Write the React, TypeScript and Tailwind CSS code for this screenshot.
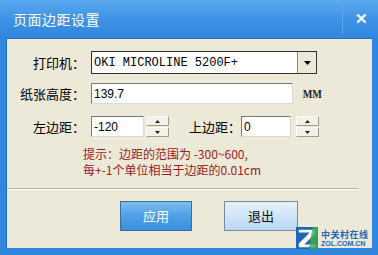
import React from "react";

const cjk = { fontFamily: '"Noto Sans CJK SC", "Noto Sans", sans-serif' };
const mono = { fontFamily: '"Liberation Mono", "Noto Sans CJK SC", monospace' };

function Spinner() {
  return (
    <div className="flex flex-col w-[23px] h-[21px] gap-[1px]">
      <div className="flex-1 flex items-center justify-center bg-[#f3f1e8] border border-t-white border-l-white border-b-[#a09c8c] border-r-[#a09c8c]">
        <svg width="5" height="3" viewBox="0 0 5 3"><path d="M2.5 0 L5 3 L0 3 Z" fill="#222" /></svg>
      </div>
      <div className="flex-1 flex items-center justify-center bg-[#f3f1e8] border border-t-white border-l-white border-b-[#a09c8c] border-r-[#a09c8c]">
        <svg width="5" height="3" viewBox="0 0 5 3"><path d="M0 0 L5 0 L2.5 3 Z" fill="#222" /></svg>
      </div>
    </div>
  );
}

function Inset({ w, children }: { w: string; children?: React.ReactNode }) {
  return (
    <div
      className={`${w} h-[21px] bg-white border border-t-[#7a7a7a] border-l-[#7a7a7a] border-b-[#dcdad0] border-r-[#dcdad0] flex items-center pl-[2px] text-[12px] text-black`}
      style={{ fontFamily: '"Liberation Sans", Arial, sans-serif' }}
    >
      {children}
    </div>
  );
}

export default function App() {
  return (
    <div className="w-[378px] h-[255px] bg-[#2f86dc] flex flex-col relative overflow-hidden" style={cjk}>
      {/* title bar */}
      <div className="h-[38px] flex items-center bg-gradient-to-b from-[#5aa8ee] via-[#3f93e6] to-[#2f86dc] relative">
        <span className="ml-[13px] text-[14px] text-white tracking-[0.5px]">页面边距设置</span>
        <div className="ml-auto h-full flex items-center">
          <div className="w-[1px] h-[30px] bg-[#5ea6ea] mr-[6px]" />
          <span className="w-[24px] text-center text-white text-[15px] font-bold mr-[5px]" style={{ fontFamily: '"Liberation Sans", Arial, sans-serif' }}>✕</span>
        </div>
      </div>
      {/* content */}
      <div className="mx-[6px] h-[210px] bg-[#ece9d8] border-l border-t border-[#1f6fc4] flex flex-col text-[13px] text-black">
        {/* row 1 */}
        <div className="flex items-center mt-[12px] h-[23px]">
          <div className="w-[78px] text-right">打印机：</div>
          <div className="ml-[6px] w-[226px] h-[23px] bg-white border border-[#333] flex items-center">
            <span className="pl-[2px] text-[12px]" style={mono}>OKI MICROLINE 5200F+</span>
            <div className="ml-auto w-[19px] h-full bg-[#ece9d8] border-l border-[#888] flex items-center justify-center">
              <svg width="7" height="4" viewBox="0 0 7 4"><path d="M0 0 L7 0 L3.5 4 Z" fill="#000" /></svg>
            </div>
          </div>
        </div>
        {/* row 2 */}
        <div className="flex items-center mt-[9px] h-[21px]">
          <div className="w-[78px] text-right">纸张高度：</div>
          <div className="ml-[6px]">
            <Inset w="w-[202px]">139.7</Inset>
          </div>
          <span className="ml-[8px] text-[12px] font-bold text-[#222]" style={{ fontFamily: '"Liberation Serif", serif', transform: "scaleX(0.85)" }}>MM</span>
        </div>
        {/* row 3 */}
        <div className="flex items-center mt-[12px] h-[21px]">
          <div className="w-[78px] text-right">左边距：</div>
          <div className="ml-[6px]">
            <Inset w="w-[53px]">-120</Inset>
          </div>
          <div className="ml-[2px]"><Spinner /></div>
          <div className="ml-[20px]">上边距：</div>
          <div>
            <Inset w="w-[50px]">0</Inset>
          </div>
          <div className="ml-[5px]"><Spinner /></div>
        </div>
        {/* hint */}
        <div className="ml-[76px] mt-[9px] text-[12px] leading-[16px] text-[#9a1c1c] flex flex-col">
          <span className="block h-[16px]">提示：边距的范围为 -300~600,</span>
          <span className="block h-[16px]">每+-1个单位相当于边距的0.01cm</span>
        </div>
        {/* separator */}
        <div className="mt-[10px] mr-[14px] h-[2px] border-t border-[#b8b4a4] border-b border-b-white" />
        {/* buttons */}
        <div className="flex mt-[11px] ml-[113px]">
          <div className="w-[72px] h-[30px] flex items-center justify-center text-white text-[13px] bg-gradient-to-b from-[#7dbcf0] via-[#4d9fe6] to-[#3a8ede] border border-[#3a6ea0]">
            应用
          </div>
          <div className="ml-[32px] w-[74px] h-[30px] flex items-center justify-center text-[#111] text-[13px] bg-gradient-to-b from-[#e6f2fc] via-[#cfe5f8] to-[#b9d8f2] border border-[#7b8a99]">
            退出
          </div>
        </div>
      </div>
      {/* watermark */}
      <div className="absolute left-[296px] top-[227px] flex items-center">
        <svg width="22" height="22" viewBox="0 0 24 24">
          <rect x="0" y="0" width="24" height="24" fill="#1d66b8" />
          <path d="M3 3 L21 3 L21 7 L9 19 L21 19 L21 22 L3 22 L3 18 L15 6 L3 6 Z" fill="#ffffff" />
          <path d="M18 0 L24 0 L24 24 L14 24 Z" fill="#3fae49" opacity="0.8" />
        </svg>
        <div className="ml-[3px] flex flex-col leading-none">
          <span className="text-[9px] text-[#1d66b8] font-bold tracking-[0.5px]">中关村在线</span>
          <span className="text-[7px] text-[#1d66b8] font-bold mt-[1px]" style={{ fontFamily: '"Liberation Sans", Arial, sans-serif' }}>ZOL.COM.CN</span>
        </div>
      </div>
    </div>
  );
}
